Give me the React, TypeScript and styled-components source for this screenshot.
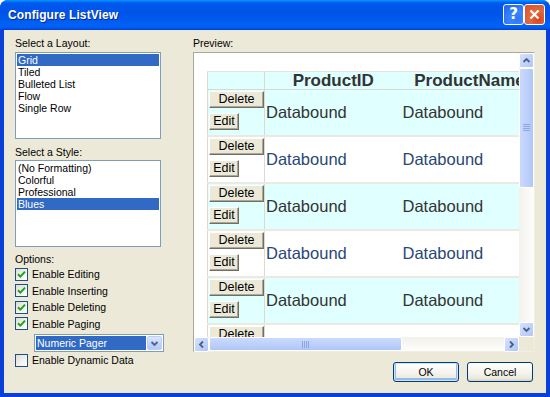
import React from "react";
import styled, { createGlobalStyle } from "styled-components";

const GlobalStyle = createGlobalStyle`
  html, body {
    margin: 0;
    padding: 0;
    background: #ffffff;
  }
  body {
    font-family: "Liberation Sans", Arial, sans-serif;
    font-size: 10.5px;
    color: #000;
  }
`;

const Window = styled.div`
  width: 550px;
  height: 397px;
  display: flex;
  flex-direction: column;
  background: #0a3fd8;
  border-radius: 8px 8px 0 0;
  overflow: hidden;
`;

const TitleBar = styled.div`
  height: 30px;
  flex: none;
  display: flex;
  align-items: center;
  justify-content: space-between;
  padding: 0 5px 0 8px;
  background: linear-gradient(
    to bottom,
    #0997ff 0%,
    #0058ee 10%,
    #0054e8 45%,
    #0062f5 85%,
    #005bf0 93%,
    #003dd7 100%
  );
`;

const Title = styled.div`
  color: #fff;
  font-weight: bold;
  font-size: 12px;
  text-shadow: 1px 1px 0 #0b2a8a;
  letter-spacing: 0.1px;
`;

const TitleButtons = styled.div`
  display: flex;
  padding-bottom: 2px;
`;

const CaptionButton = styled.div<{ $variant: "help" | "close" }>`
  width: 21px;
  height: 21px;
  box-sizing: border-box;
  border: 1px solid #ffffff;
  border-radius: 3px;
  display: flex;
  align-items: center;
  justify-content: center;
  color: #fff;
  font-weight: bold;
  font-size: 15px;
  font-family: "DejaVu Sans", sans-serif;
  background: ${(p) =>
    p.$variant === "help"
      ? "radial-gradient(circle at 70% 75%, #2e78f4 0%, #3a86ff 40%, #1c5ff0 100%)"
      : "radial-gradient(circle at 70% 75%, #d8431c 0%, #e4693f 45%, #d0502a 100%)"};
`;

const Client = styled.div`
  flex: 1;
  margin: 0 4px 4px 4px;
  background: #ece9d8;
  display: flex;
  padding: 7px 11px 0 11px;
`;

const LeftCol = styled.div`
  width: 150px;
  flex: none;
  display: flex;
  flex-direction: column;
`;

const RightCol = styled.div`
  flex: 1;
  margin-left: 28px;
  display: flex;
  flex-direction: column;
`;

const Label = styled.div<{ $top?: number; $bottom?: number }>`
  line-height: 13px;
  height: 13px;
  margin-top: ${(p) => p.$top ?? 0}px;
  margin-bottom: ${(p) => p.$bottom ?? 0}px;
  white-space: nowrap;
`;

const ListBox = styled.div`
  width: 146px;
  height: 87px;
  box-sizing: border-box;
  border: 1px solid #7f9db9;
  background: #ffffff;
  padding: 1px 1px;
`;

const ListItem = styled.div<{ $selected?: boolean }>`
  height: 12px;
  line-height: 12px;
  padding-left: 1px;
  white-space: nowrap;
  background: ${(p) => (p.$selected ? "#316ac5" : "transparent")};
  color: ${(p) => (p.$selected ? "#ffffff" : "#000000")};
`;

const OptionRow = styled.div`
  height: 16.5px;
  display: flex;
  align-items: center;
  gap: 4px;
  white-space: nowrap;
`;

const CheckBox = styled.div`
  width: 13px;
  height: 13px;
  box-sizing: border-box;
  border: 1px solid #1c5180;
  background: linear-gradient(135deg, #dcdcd7 0%, #f3f3ef 60%, #ffffff 100%);
  display: flex;
  align-items: center;
  justify-content: center;
  flex: none;
`;

const Combo = styled.div`
  width: 130px;
  height: 18px;
  box-sizing: border-box;
  margin: 2px 0 0 19px;
  border: 1px solid #7f9db9;
  background: #ffffff;
  padding: 1px;
  display: flex;
`;

const ComboText = styled.div`
  flex: 1;
  background: #316ac5;
  color: #ffffff;
  line-height: 14px;
  padding-left: 1px;
  white-space: nowrap;
`;

const ComboButton = styled.div`
  width: 15px;
  margin-left: 1px;
  box-sizing: border-box;
  border: 1px solid #bccdf7;
  border-radius: 2px;
  background: linear-gradient(to bottom, #dbe6fe 0%, #c1d3fb 60%, #b3c8f5 100%);
  display: flex;
  align-items: center;
  justify-content: center;
`;

const PreviewFrame = styled.div`
  height: 300px;
  box-sizing: border-box;
  border: 1px solid;
  border-color: #aca899 #f1efe2 #f1efe2 #aca899;
  display: grid;
  grid-template-columns: 1fr 15px;
  grid-template-rows: 1fr 14px;
`;

const Viewport = styled.div`
  background: #ffffff;
  overflow: hidden;
  padding: 18px 0 0 13px;
`;

const Grid = styled.table`
  border-collapse: collapse;
  table-layout: fixed;
  width: 330px;
  border-left: 1px solid #dcdad0;
  border-top: 1px solid #e6e4da;
  font-family: "Liberation Sans", Arial, sans-serif;
`;

const HeaderCell = styled.th<{ $first?: boolean }>`
  height: 17px;
  padding: 0;
  background: #e0ffff;
  color: #333333;
  font-size: 17px;
  font-weight: bold;
  text-align: center;
  white-space: nowrap;
  overflow: hidden;
  border-bottom: 1px solid #dcdad0;
  border-right: ${(p) => (p.$first ? "1px solid #dcdad0" : "none")};
  line-height: 17px;
`;

const Cell = styled.td<{ $alt: boolean }>`
  height: 45px;
  padding: 0 0 0 1px;
  background: ${(p) => (p.$alt ? "#e0ffff" : "#ffffff")};
  color: ${(p) => (p.$alt ? "#333333" : "#284775")};
  font-size: 16.5px;
  white-space: nowrap;
  overflow: hidden;
  vertical-align: middle;
  border-bottom: 2px solid #ebe9e0;
`;

const CommandCell = styled(Cell)`
  padding: 0;
  vertical-align: top;
  border-right: 1px solid #dcdad0;
`;

const Commands = styled.div`
  display: flex;
  flex-direction: column;
  align-items: flex-start;
  gap: 5px;
  padding: 1px 0 0 1px;
`;

const RowButton = styled.div<{ $w: number }>`
  width: ${(p) => p.$w}px;
  height: 17px;
  box-sizing: border-box;
  background: #ece9d8;
  border: 1px solid;
  border-color: #ffffff #716f64 #716f64 #ffffff;
  box-shadow: inset -1px -1px 0 #aca899;
  color: #000000;
  font-size: 12.5px;
  line-height: 15px;
  text-align: center;
`;

const VScroll = styled.div`
  display: flex;
  flex-direction: column;
  background: linear-gradient(to right, #f3f1ec 0%, #fefefb 100%);
`;

const HScroll = styled.div`
  display: flex;
  background: linear-gradient(to bottom, #f3f1ec 0%, #fefefb 100%);
`;

const ScrollButton = styled.div`
  width: 15px;
  height: 15px;
  flex: none;
  box-sizing: border-box;
  border: 1px solid #ffffff;
  border-radius: 2px;
  background: linear-gradient(135deg, #d5e2fe 0%, #c1d3fb 55%, #b1c6f6 100%);
  display: flex;
  align-items: center;
  justify-content: center;
`;

const Thumb = styled.div<{ $len: number; $horizontal?: boolean }>`
  flex: none;
  ${(p) => (p.$horizontal ? `width: ${p.$len}px;` : `height: ${p.$len}px;`)}
  box-sizing: border-box;
  border: 1px solid #ffffff;
  border-radius: 2px;
  background: ${(p) =>
    p.$horizontal
      ? "linear-gradient(to bottom, #cad9fd 0%, #bccffb 60%, #b0c5f6 100%)"
      : "linear-gradient(to right, #cad9fd 0%, #bccffb 60%, #b0c5f6 100%)"};
  display: flex;
  align-items: center;
  justify-content: center;
`;

const Track = styled.div`
  flex: 1;
`;

const Corner = styled.div`
  background: #ece9d8;
`;

const Footer = styled.div`
  display: flex;
  justify-content: flex-end;
  gap: 8px;
  margin-top: 10px;
  padding-right: 2px;
`;

const DialogButton = styled.div<{ $default?: boolean }>`
  width: 66px;
  height: 20px;
  box-sizing: border-box;
  border: 1px solid #003c74;
  border-radius: 3px;
  background: linear-gradient(to bottom, #ffffff 0%, #f4f3ee 55%, #ece9dc 85%, #d6d0c5 100%);
  box-shadow: ${(p) =>
    p.$default ? "inset 0 0 0 1px #cee7ff, inset 0 -1px 0 2px #98b8ea" : "none"};
  line-height: 18px;
  text-align: center;
  font-size: 10.5px;
`;

const Check = () => (
  <svg width="9" height="9" viewBox="0 0 9 9">
    <path d="M1 4.2 L3.4 6.6 L8 1.6" fill="none" stroke="#21a121" strokeWidth="2" />
  </svg>
);

const Chevron = ({ dir }: { dir: "up" | "down" | "left" | "right" }) => {
  const rot = { down: 0, up: 180, left: 90, right: 270 }[dir];
  return (
    <svg width="9" height="9" viewBox="0 0 9 9" style={{ transform: `rotate(${rot}deg)` }}>
      <path d="M1.5 3 L4.5 6 L7.5 3" fill="none" stroke="#4d6185" strokeWidth="1.8" />
    </svg>
  );
};

const Grip = ({ horizontal }: { horizontal?: boolean }) => (
  <svg width={horizontal ? 8 : 7} height={horizontal ? 7 : 8} viewBox={horizontal ? "0 0 8 7" : "0 0 7 8"}>
    {[0, 2, 4, 6].map((o) =>
      horizontal ? (
        <line key={o} x1={o + 0.5} y1="0" x2={o + 0.5} y2="7" stroke="#8aa6e8" strokeWidth="1" />
      ) : (
        <line key={o} x1="0" y1={o + 0.5} x2="7" y2={o + 0.5} stroke="#8aa6e8" strokeWidth="1" />
      )
    )}
  </svg>
);

const layouts = ["Grid", "Tiled", "Bulleted List", "Flow", "Single Row"];
const styles = ["(No Formatting)", "Colorful", "Professional", "Blues"];
const options = [
  { label: "Enable Editing", checked: true },
  { label: "Enable Inserting", checked: true },
  { label: "Enable Deleting", checked: true },
  { label: "Enable Paging", checked: true },
];
const rows = [0, 1, 2, 3, 4, 5];

function App() {
  return (
    <>
      <GlobalStyle />
      <Window>
        <TitleBar>
          <Title>Configure ListView</Title>
          <TitleButtons>
            <CaptionButton $variant="help">?</CaptionButton>
            <CaptionButton $variant="close">
              <svg width="11" height="11" viewBox="0 0 11 11">
                <path d="M1.5 1.5 L9.5 9.5 M9.5 1.5 L1.5 9.5" stroke="#fff" strokeWidth="2.2" />
              </svg>
            </CaptionButton>
          </TitleButtons>
        </TitleBar>
        <Client>
          <LeftCol>
            <Label $bottom={2}>Select a Layout:</Label>
            <ListBox>
              {layouts.map((l, i) => (
                <ListItem key={l} $selected={i === 0}>
                  {l}
                </ListItem>
              ))}
            </ListBox>
            <Label $top={7} $bottom={1}>
              Select a Style:
            </Label>
            <ListBox>
              {styles.map((s) => (
                <ListItem key={s} $selected={s === "Blues"}>
                  {s}
                </ListItem>
              ))}
            </ListBox>
            <Label $top={6}>Options:</Label>
            {options.map((o) => (
              <OptionRow key={o.label}>
                <CheckBox>{o.checked && <Check />}</CheckBox>
                {o.label}
              </OptionRow>
            ))}
            <Combo>
              <ComboText>Numeric Pager</ComboText>
              <ComboButton>
                <Chevron dir="down" />
              </ComboButton>
            </Combo>
            <OptionRow>
              <CheckBox />
              Enable Dynamic Data
            </OptionRow>
          </LeftCol>
          <RightCol>
            <Label $bottom={2}>Preview:</Label>
            <PreviewFrame>
              <Viewport>
                <Grid>
                  <colgroup>
                    <col style={{ width: 57 }} />
                    <col style={{ width: 137 }} />
                    <col style={{ width: 136 }} />
                  </colgroup>
                  <thead>
                    <tr>
                      <HeaderCell $first />
                      <HeaderCell>ProductID</HeaderCell>
                      <HeaderCell>ProductName</HeaderCell>
                    </tr>
                  </thead>
                  <tbody>
                    {rows.map((r) => {
                      const alt = r % 2 === 0;
                      return (
                        <tr key={r}>
                          <CommandCell $alt={alt}>
                            <Commands>
                              <RowButton $w={55}>Delete</RowButton>
                              <RowButton $w={30}>Edit</RowButton>
                            </Commands>
                          </CommandCell>
                          <Cell $alt={alt}>Databound</Cell>
                          <Cell $alt={alt}>Databound</Cell>
                        </tr>
                      );
                    })}
                  </tbody>
                </Grid>
              </Viewport>
              <VScroll>
                <ScrollButton>
                  <Chevron dir="up" />
                </ScrollButton>
                <Thumb $len={120}>
                  <Grip />
                </Thumb>
                <Track />
                <ScrollButton>
                  <Chevron dir="down" />
                </ScrollButton>
              </VScroll>
              <HScroll>
                <ScrollButton>
                  <Chevron dir="left" />
                </ScrollButton>
                <Thumb $len={193} $horizontal>
                  <Grip horizontal />
                </Thumb>
                <Track />
                <ScrollButton>
                  <Chevron dir="right" />
                </ScrollButton>
              </HScroll>
              <Corner />
            </PreviewFrame>
            <Footer>
              <DialogButton $default>OK</DialogButton>
              <DialogButton>Cancel</DialogButton>
            </Footer>
          </RightCol>
        </Client>
      </Window>
    </>
  );
}

export default App;
